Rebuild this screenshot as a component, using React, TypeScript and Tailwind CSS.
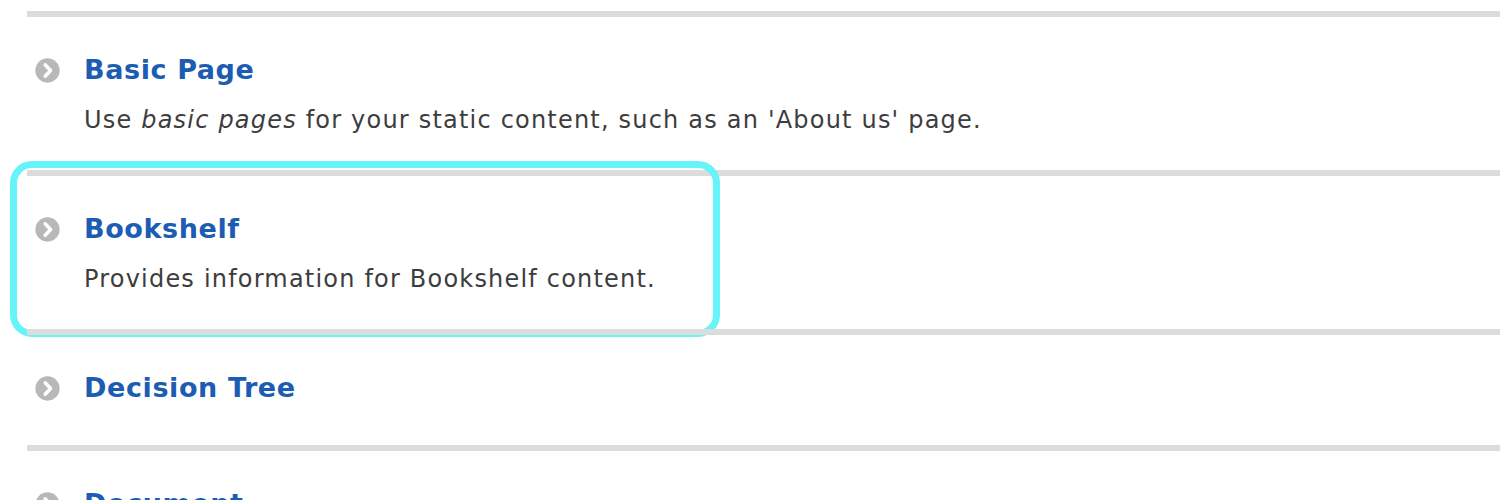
import React from 'react';

type Row = {
  title: string;
  desc?: React.ReactNode;
  highlighted?: boolean;
};

const rows: Row[] = [
  {
    title: 'Basic Page',
    desc: (
      <>
        Use <em>basic pages</em> for your static content, such as an 'About us' page.
      </>
    ),
  },
  {
    title: 'Bookshelf',
    desc: 'Provides information for Bookshelf content.',
    highlighted: true,
  },
  { title: 'Decision Tree' },
  { title: 'Document' },
];

const ArrowIcon = () => (
  <svg width="27" height="27" viewBox="0 0 20 20" className="shrink-0">
    <circle cx="10" cy="10" r="9" fill="#b8b8b8" />
    <path d="M8.3 5.8 L12.3 10 L8.3 14.2" fill="none" stroke="#ffffff" strokeWidth="2.6" strokeLinecap="round" strokeLinejoin="round" />
  </svg>
);

export default function App() {
  return (
    <div className="w-[1500px] h-[500px] overflow-hidden bg-white pt-[11px] font-['DejaVu_Sans',sans-serif]">
      <ul className="ml-[27px]">
        {rows.map((row) => (
          <li
            key={row.title}
            className={`relative border-t-[6px] border-[#dcdcdc] pl-[7px] pt-[35px] ${row.desc ? 'pb-[35px]' : 'pb-[39px]'}`}
          >
            {row.highlighted && (
              <div className="absolute -top-[15px] -left-[17px] w-[710px] -bottom-[8px] rounded-[22px] border-[7px] border-[#66f4f8]" />
            )}
            <div className="flex items-center gap-[23px]">
              <ArrowIcon />
              <span className="text-[27px] leading-[36px] font-bold tracking-[0.6px] text-[#1c5cb3]">{row.title}</span>
            </div>
            {row.desc && (
              <p className="mt-[17px] pl-[50px] text-[24px] leading-[30px] tracking-[1.2px] text-[#3d3d3d]">{row.desc}</p>
            )}
          </li>
        ))}
      </ul>
    </div>
  );
}
